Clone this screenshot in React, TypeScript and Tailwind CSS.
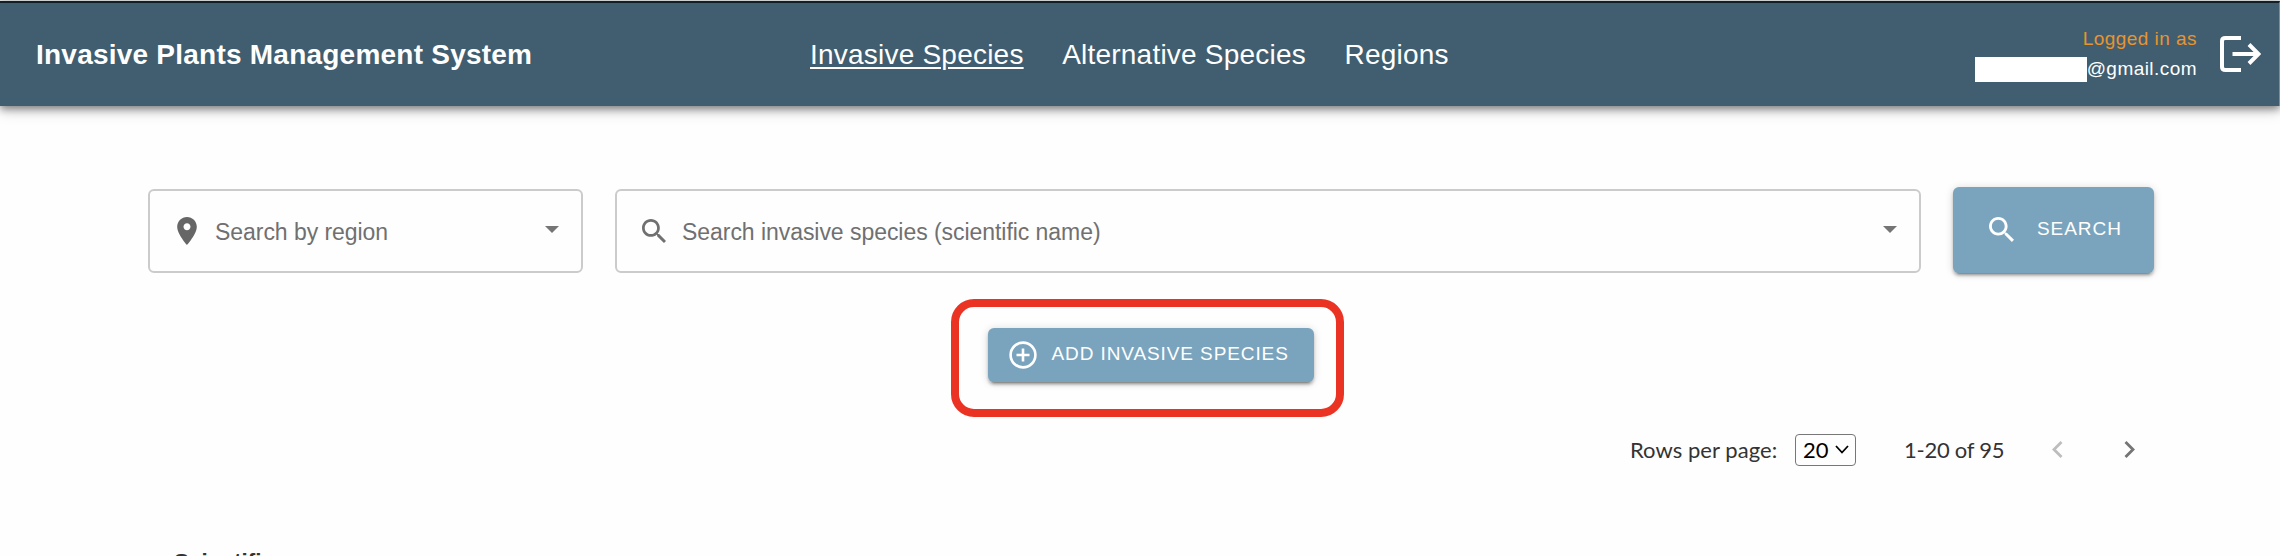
import React from "react";

const sans = "font-['Liberation_Sans',Arial,sans-serif]";

function SearchIcon({ className }: { className: string }) {
  return (
    <svg viewBox="3 3 17.49 17.49" fill="currentColor" className={className}>
      <path d="M15.5 14h-.79l-.28-.27C15.41 12.59 16 11.11 16 9.5 16 5.91 13.09 3 9.5 3S3 5.91 3 9.5 5.91 16 9.5 16c1.61 0 3.09-.59 4.23-1.57l.27.28v.79l5 4.99L20.49 19l-4.99-5zm-6 0C7.01 14 5 11.99 5 9.5S7.01 5 9.5 5 14 7.01 14 9.5 11.99 14 9.5 14z" />
    </svg>
  );
}

function Caret() {
  return (
    <svg viewBox="0 0 14 7" fill="#757575" className="mb-[3px] h-[7px] w-[14px] shrink-0">
      <path d="M0 0h14L7 7z" />
    </svg>
  );
}

const shadow =
  "shadow-[0_5px_2px_-4px_rgba(0,0,0,0.3),0_3px_3px_0_rgba(0,0,0,0.22),0_1px_8px_0_rgba(0,0,0,0.16)]";

export default function App() {
  return (
    <div className={"flex h-[556px] w-[2280px] flex-col overflow-hidden bg-[#fefefe] " + sans}>
      <div className="h-px shrink-0 bg-[#e4e8e8]" />
      <header className="flex h-[104.5px] shrink-0 items-center border-t-[2px] border-r border-t-[#131f26] border-r-[#7a8f9b] bg-[#405e6f] text-white shadow-[0_3px_8px_0_rgba(0,0,0,0.45),0_6px_14px_0_rgba(0,0,0,0.12)]">
        <div className="w-[810px] pt-[2px] pl-[36px] text-[28px] font-bold leading-[34px] whitespace-nowrap">
          <span className="tracking-[0.23px]">Invasive Plants Management System</span>
        </div>
        <nav className="flex grow gap-[38.500px] pt-[2px] text-[28px] leading-[34px] tracking-[0.22px] whitespace-nowrap">
          <a className="underline decoration-2 underline-offset-[3px]">Invasive Species</a>
          <a>Alternative Species</a>
          <a>Regions</a>
        </nav>
        <div className="mr-[22px] flex flex-col items-end text-[19px] leading-[30px] tracking-[0.45px]">
          <span className="text-[#e8942f]">Logged in as</span>
          <span className="flex items-center">
            <span className="h-[25px] w-[112px] bg-white" />
            <span>@gmail.com</span>
          </span>
        </div>
        <svg viewBox="0 0 42 38" fill="none" stroke="currentColor" strokeWidth="4" className="mr-[18px] h-[38px] w-[42px]">
          <path d="M22 3H6.500Q3 3 3 6V32Q3 35 6.500 35H22" />
          <path d="M13.500 19H40M30 9.500L39.500 19L30 28.500" />
        </svg>
      </header>

      <div className="mt-[81.500px] flex h-[86px] shrink-0 items-start pl-[148px] text-[23px] tracking-[-0.05px] text-[#707070]">
        <div className="mt-[2px] flex h-[84px] w-[435px] items-center rounded-[6px] border-2 border-[#cbcbcb] pr-[22px] pl-[27px]">
          <svg viewBox="5 2 14 20" fill="#666" className="h-[28px] w-[20px]">
            <path d="M12 2C8.130 2 5 5.130 5 9c0 5.250 7 13 7 13s7-7.750 7-13c0-3.870-3.130-7-7-7zm0 9.500c-1.380 0-2.500-1.120-2.500-2.500s1.120-2.500 2.500-2.500 2.500 1.120 2.500 2.500-1.120 2.500-2.500 2.500z" />
          </svg>
          <span className="grow pt-[2px] pl-[18px] whitespace-nowrap">Search by region</span>
          <Caret />
        </div>
        <div className="mt-[2px] ml-[32px] flex h-[84px] w-[1306px] items-center rounded-[6px] border-2 border-[#cbcbcb] pr-[22px] pl-[25px]">
          <SearchIcon className="h-[24px] w-[24px]" />
          <span className="grow pt-[2px] pl-[16px] whitespace-nowrap">Search invasive species (scientific name)</span>
          <Caret />
        </div>
        <button className={"ml-[32px] flex h-[85.5px] w-[201px] items-center rounded-[6px] bg-[#7aa4be] pl-[36px] text-[19px] text-white " + shadow}>
          <SearchIcon className="h-[25px] w-[25px]" />
          <span className="pb-px pl-[23px] tracking-[0.95px]">SEARCH</span>
        </button>
      </div>

      <div className="mt-[26px] ml-[951px] flex h-[118px] w-[393px] shrink-0 items-center justify-center rounded-[23px] border-[8px] border-[#eb3323]">
        <button className={"mt-[-7px] ml-[6px] flex h-[54px] w-[326px] items-center rounded-[6px] bg-[#7aa4be] pl-[21px] text-[19px] text-white whitespace-nowrap " + shadow}>
          <svg viewBox="0 0 28 28" fill="none" stroke="currentColor" strokeWidth="2.6" className="h-[28px] w-[28px]">
            <circle cx="14" cy="14" r="12.400" />
            <path d="M14 7.500V20.500M7.500 14H20.500" />
          </svg>
          <span className="pl-[15px] tracking-[0.9px]">ADD INVASIVE SPECIES</span>
        </button>
      </div>

      <div className="mt-[14.500px] ml-[1630px] flex h-[36px] shrink-0 items-center font-['Lato',sans-serif] text-[22px] text-[#333] whitespace-nowrap">
        <span className="w-[165px] pb-px tracking-[0.05px]">Rows per page:</span>
        <span className="flex h-[32px] w-[61px] items-center justify-between rounded-[4px] border-[1.500px] border-[#777] pr-[6px] pl-[7px] text-black">
          20
          <svg viewBox="0 0 14 9" fill="none" stroke="currentColor" strokeWidth="1.800" className="h-[9px] w-[14px]">
            <path d="M1 1L7 7.500L13 1" />
          </svg>
        </span>
        <span className="ml-[48px] w-[148px] pb-px tracking-[-0.25px]">1-20 of 95</span>
        <svg viewBox="0 0 11 17" fill="none" stroke="#bdbdbd" strokeWidth="2.800" className="h-[17px] w-[11px]">
          <path d="M9.500 1L2 8.500L9.500 16" />
        </svg>
        <svg viewBox="0 0 11 17" fill="none" stroke="#757575" strokeWidth="2.800" className="ml-[61px] h-[17px] w-[11px]">
          <path d="M1.500 1L9 8.500L1.500 16" />
        </svg>
      </div>

      <div className="mt-[81.500px] ml-[174px] shrink-0 text-[22.500px] leading-[26px] font-bold text-[#333]">Scientific</div>
    </div>
  );
}
